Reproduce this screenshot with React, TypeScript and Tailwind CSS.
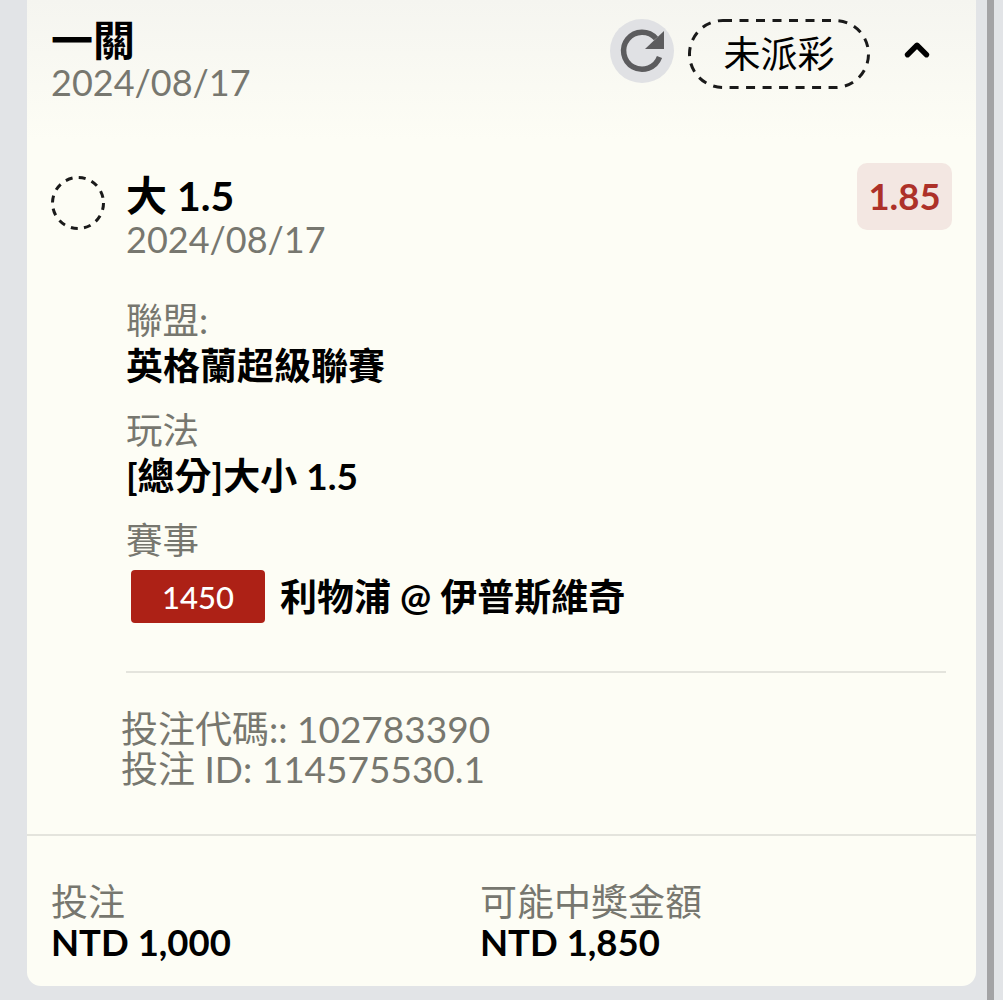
import { ChevronUp } from 'lucide-react'

function Field({ label, value }: { label: string; value: string }) {
  return (
    <div className="mb-[18px]">
      <div className="text-[36.5px] leading-[46px] text-[#77776f]">{label}</div>
      <div className="text-[37px] leading-[46px] font-bold text-black">{value}</div>
    </div>
  )
}

function ReloadIcon() {
  return (
    <svg viewBox="0 0 64 64" className="h-[64px] w-[64px]">
      <circle cx="32" cy="32" r="32" fill="#e0e1e4" />
      <path d="M46 19.5A18.5 18.5 0 1 0 49.5 38" fill="none" stroke="#5c5c5e" strokeWidth="5.5" />
      <path d="M54 12V30H35Z" fill="#5c5c5e" />
    </svg>
  )
}

export default function App() {
  return (
    <div
      className="flex h-[1000px] w-[1003px] overflow-hidden bg-[#e2e4e7] pl-[27px] text-black"
      style={{ fontFamily: 'Lato, "Noto Sans CJK TC", sans-serif' }}
    >
      <div className="flex h-[986px] w-[949px] flex-col rounded-b-[14px] bg-[#fdfdf5]">
        <div className="flex h-[140px] items-start justify-between bg-gradient-to-b from-[#f5f5f0] to-[#fdfdf5] pl-[24px] pr-[40px] pt-[18px]">
          <div>
            <div className="text-[42px] leading-[44px] font-bold">一關</div>
            <div className="text-[36px] leading-[40px] text-[#77776f]">2024/08/17</div>
          </div>
          <div className="flex items-start pt-[1px]">
            <ReloadIcon />
            <div className="relative ml-[14px] flex h-[70px] w-[182px] items-center justify-center text-[37px]">
              <svg viewBox="0 0 182 70" className="absolute inset-0 h-full w-full">
                <rect x="1.5" y="1.5" width="179" height="67" rx="33.5" fill="none" stroke="#1a1a1a" strokeWidth="3" strokeDasharray="9 7.5" />
              </svg>
              未派彩
            </div>
            <ChevronUp className="ml-[28px] mt-[12px] h-[38px] w-[38px]" strokeWidth={3.4} />
          </div>
        </div>

        <div className="flex flex-1 flex-col pl-[24px] pr-[24px]">
          <div className="flex items-start pt-[23px]">
            <svg viewBox="0 0 54 54" className="mt-[13px] h-[54px] w-[54px]">
              <circle cx="27" cy="27" r="25.5" fill="none" stroke="#1a1a1a" strokeWidth="3" strokeDasharray="7 6.35" />
            </svg>
            <div className="ml-[21px] flex-1">
              <div className="mt-[10px] text-[41px] leading-[46px] font-bold">大 1.5</div>
              <div className="text-[36px] leading-[40px] text-[#77776f]">2024/08/17</div>
            </div>
            <div className="flex h-[67px] w-[95px] items-center justify-center rounded-[10px] bg-[#f3e7e2] text-[36.5px] font-bold text-[#ad3129]">
              1.85
            </div>
          </div>

          <div className="mt-[38px] pl-[75px]">
            <Field label="聯盟:" value="英格蘭超級聯賽" />
            <Field label="玩法" value="[總分]大小 1.5" />
            <div className="text-[36.5px] leading-[46px] text-[#77776f]">賽事</div>
            <div className="mt-[6px] flex items-center pl-[5px]">
              <div className="flex h-[53px] w-[134px] items-center justify-center rounded-[4px] bg-[#ad2116] text-[31px] font-medium text-white">
                1450
              </div>
              <div className="ml-[15px] text-[37px] font-bold">利物浦 @ 伊普斯維奇</div>
            </div>
          </div>

          <div className="mt-[46px] ml-[75px] mr-[6px] h-[2px] bg-[#e4e4dd]" />

          <div className="mt-[36px] ml-[70px] text-[37px] leading-[40px] text-[#77776f]">
            <div>投注代碼:: 102783390</div>
            <div>投注 ID: 114575530.1</div>
          </div>
        </div>

        <div className="flex h-[152px] border-t-[2px] border-[#e4e4dd] pl-[24px] pt-[46px]">
          <div className="w-[429px]">
            <div className="text-[37px] leading-[40px] text-[#77776f]">投注</div>
            <div className="text-[36.5px] leading-[40px] font-bold">NTD 1,000</div>
          </div>
          <div>
            <div className="text-[37px] leading-[40px] text-[#77776f]">可能中獎金額</div>
            <div className="text-[36.5px] leading-[40px] font-bold">NTD 1,850</div>
          </div>
        </div>
      </div>
      <div className="ml-[11px] h-full w-[7px] bg-[#a3a3a5]" />
    </div>
  )
}
